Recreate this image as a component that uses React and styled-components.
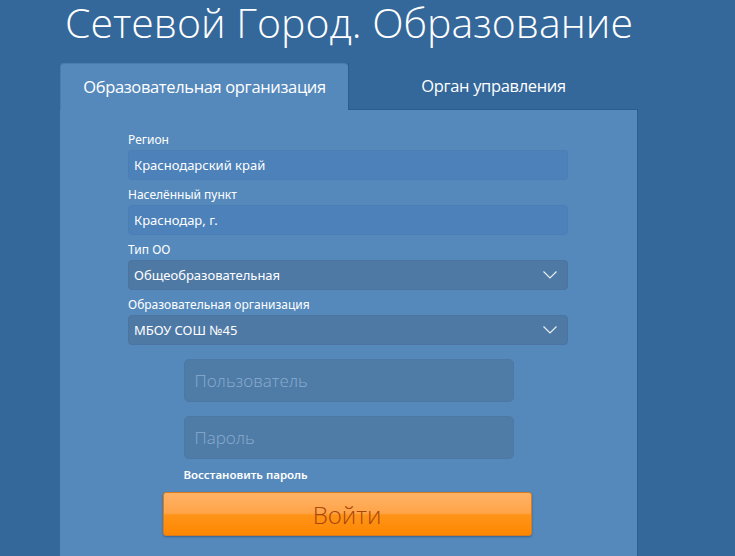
import React from 'react';
import styled, { createGlobalStyle } from 'styled-components';

const GlobalStyle = createGlobalStyle`
  html, body {
    margin: 0;
    padding: 0;
    background: #34679a;
    overflow: hidden;
  }
  * { box-sizing: border-box; }
`;

const Page = styled.div`
  width: 578px;
  margin-left: 60px;
  height: 556px;
  display: flex;
  flex-direction: column;
`;

const Title = styled.h1`
  margin: 0 0 21px;
  padding-top: 3px;
  font-family: "Open Sans", sans-serif;
  font-weight: 300;
  font-size: 41px;
  line-height: 39px;
  color: #fff;
  text-align: center;
  white-space: nowrap;
`;

const Tabs = styled.div`
  display: flex;
  height: 47px;
`;

const Tab = styled.div`
  flex: ${(p) => (p.$active ? '0 0 288px' : '1')};
  display: flex;
  align-items: center;
  justify-content: center;
  font-family: "Open Sans", sans-serif;
  font-size: 16.5px;
  letter-spacing: -0.35px;
  color: #fff;
  background: ${(p) => (p.$active ? '#5589bb' : 'transparent')};
  border-radius: ${(p) => (p.$active ? '4px 4px 0 0' : '0')};
  border-top: ${(p) => (p.$active ? '1px solid #4a7cae' : 'none')};
  border-left: 1px solid ${(p) => (p.$active ? '#4a7cae' : '#2c5d8e')};
  border-bottom: ${(p) => (p.$active ? 'none' : '1px solid #2c5d8e')};
  padding-bottom: 2px;
`;

const Panel = styled.div`
  flex: 1;
  background: #5589bb;
  border-right: 1px solid #2c5d8e;
  padding: 22px 0 0;
  display: flex;
  flex-direction: column;
`;

const Fields = styled.div`
  width: 440px;
  margin-left: 68px;
  display: flex;
  flex-direction: column;
  gap: 7px;
`;

const Group = styled.div`
  display: flex;
  flex-direction: column;
  gap: 2px;
`;

const Label = styled.div`
  font-family: "Noto Sans", sans-serif;
  font-size: 12px;
  line-height: 16px;
  color: #fff;
`;

const Field = styled.div`
  height: 30px;
  border-radius: 4px;
  background: ${(p) => (p.$select ? '#4f79a5' : '#4c81b9')};
  border: 1px solid ${(p) => (p.$select ? '#4b74a0' : '#4a7eb5')};
  display: flex;
  align-items: center;
  justify-content: space-between;
  padding: 0 10px 0 5px;
  font-family: "Noto Sans", sans-serif;
  font-size: 13px;
  color: #fff;
`;

const Login = styled.div`
  margin-top: 14px;
  display: flex;
  flex-direction: column;
  align-items: center;
`;

const LoginBlock = styled.div`
  width: 330px;
  display: flex;
  flex-direction: column;
  align-items: center;
`;

const LoginInput = styled.input`
  width: 330px;
  height: 43px;
  margin-bottom: 14px;
  border-radius: 5px;
  border: 1px solid #4d78a4;
  background: #4f7ba7;
  padding: 0 10px;
  font-family: "Open Sans", sans-serif;
  font-weight: 300;
  font-size: 17px;
  color: #fff;
  outline: none;
  &::placeholder {
    color: #8aaccd;
  }
`;

const Restore = styled.a`
  align-self: flex-start;
  margin-top: -6px;
  font-family: "Noto Sans", sans-serif;
  font-size: 11.5px;
  font-weight: 600;
  line-height: 16px;
  color: #fff;
  text-decoration: none;
`;

const Button = styled.button`
  margin-top: 9px;
  margin-left: -3px;
  width: 369px;
  height: 44px;
  border-radius: 3px;
  border: 1px solid #d87a20;
  background: linear-gradient(to bottom, #ffb266 0%, #ffa449 48%, #ff9419 52%, #ff8700 100%);
  box-shadow: 0 1px 2px rgba(30, 60, 100, 0.5);
  font-family: "Open Sans", sans-serif;
  font-weight: 300;
  font-size: 24px;
  color: #a9470a;
  cursor: pointer;
`;

const Chevron = () => (
  <svg width="14" height="8" viewBox="0 0 14 8">
    <polyline points="0.5,0.5 7,7 13.5,0.5" fill="none" stroke="#e8eef5" strokeWidth="1.2" />
  </svg>
);

const fields = [
  { label: 'Регион', value: 'Краснодарский край' },
  { label: 'Населённый пункт', value: 'Краснодар, г.' },
  { label: 'Тип ОО', value: 'Общеобразовательная', select: true },
  { label: 'Образовательная организация', value: 'МБОУ СОШ №45', select: true },
];

export default function App() {
  return (
    <>
      <GlobalStyle />
      <Page>
        <Title>Сетевой Город. Образование</Title>
        <Tabs>
          <Tab $active>Образовательная организация</Tab>
          <Tab>Орган управления</Tab>
        </Tabs>
        <Panel>
          <Fields>
            {fields.map((f) => (
              <Group key={f.label}>
                <Label>{f.label}</Label>
                <Field $select={f.select}>
                  <span>{f.value}</span>
                  {f.select && <Chevron />}
                </Field>
              </Group>
            ))}
          </Fields>
          <Login>
            <LoginBlock>
              <LoginInput placeholder="Пользователь" />
              <LoginInput type="password" placeholder="Пароль" />
              <Restore href="#">Восстановить пароль</Restore>
              <Button>Войти</Button>
            </LoginBlock>
          </Login>
        </Panel>
      </Page>
    </>
  );
}
